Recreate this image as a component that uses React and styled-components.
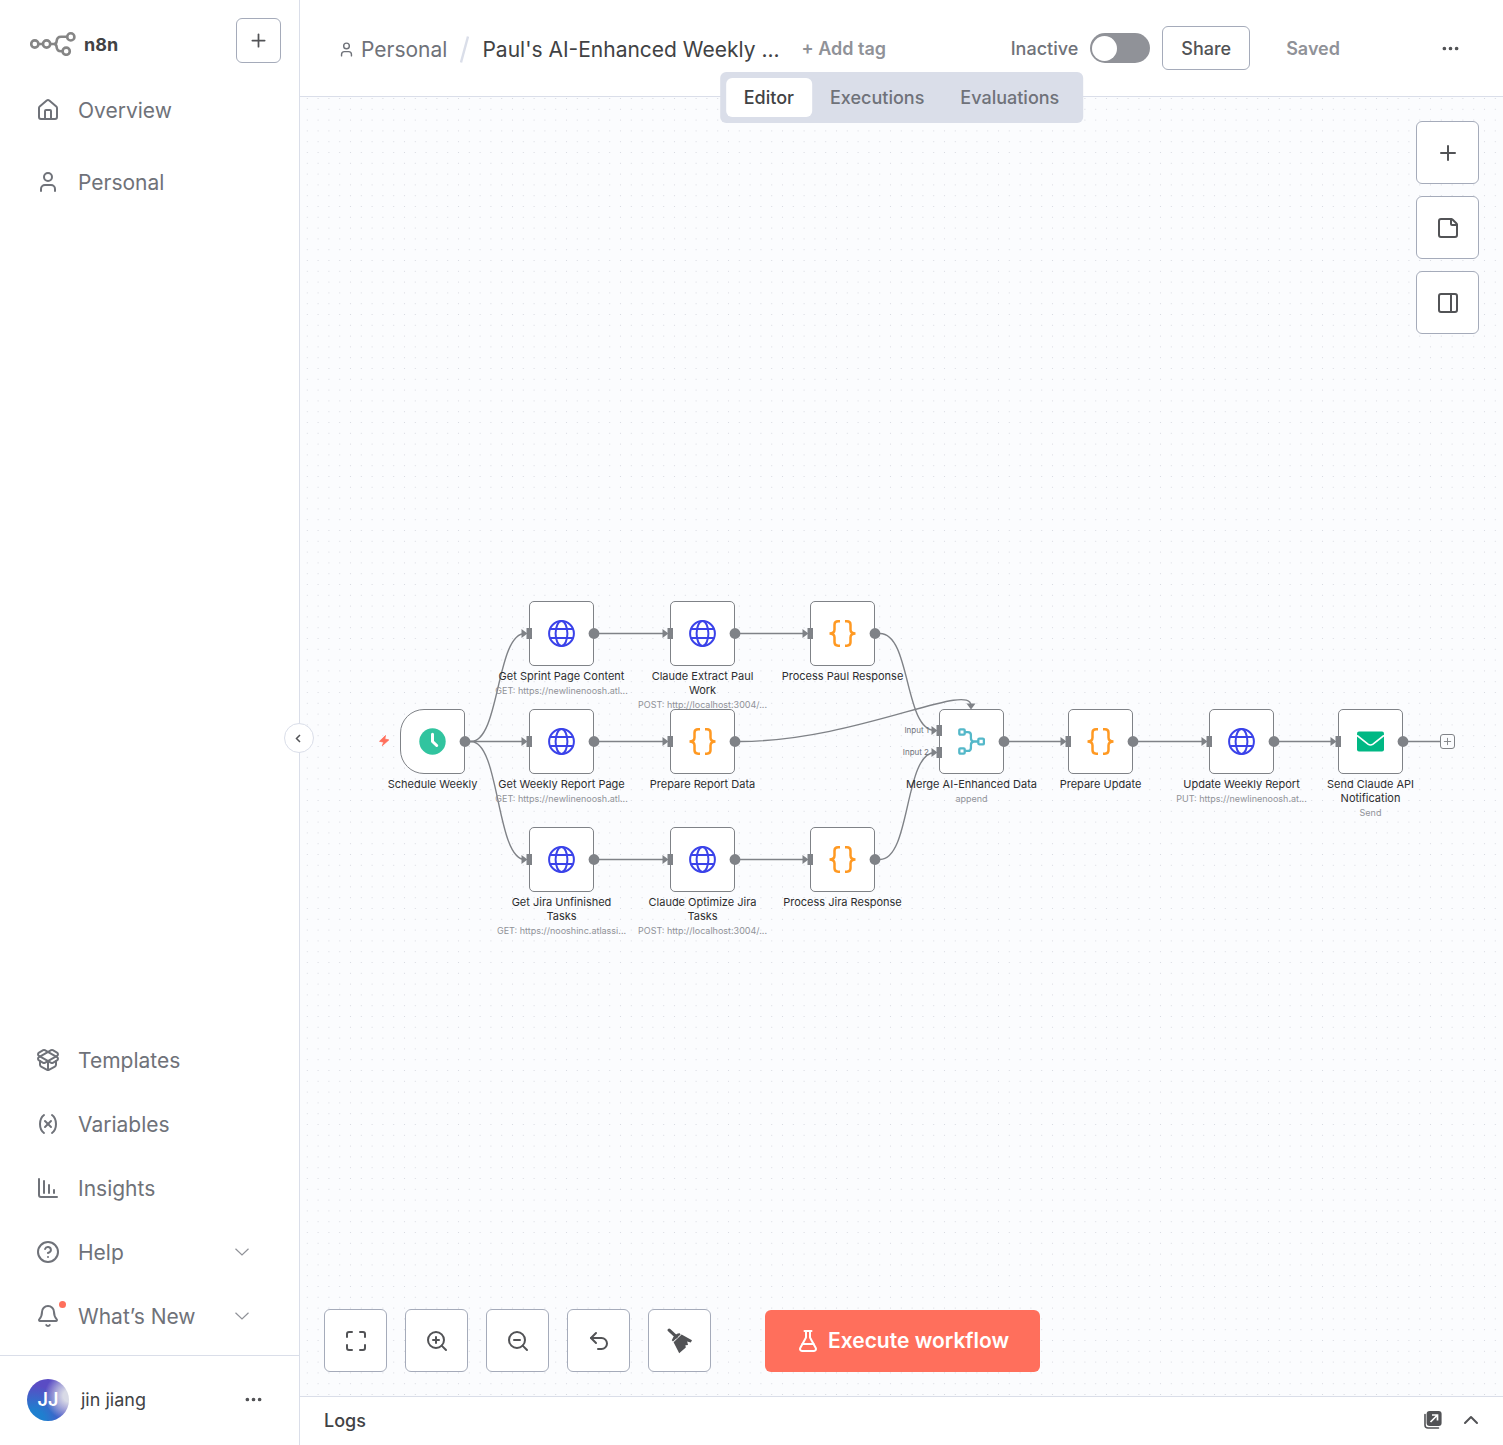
import React from "react";
import styled, { createGlobalStyle, css } from "styled-components";
import {
  Bell,
  ChartColumnDecreasing,
  ChevronUp,
  CircleHelp,
  Ellipsis,
  FlaskConical,
  House,
  Maximize,
  PackageOpen,
  PanelRight,
  Plus,
  StickyNote,
  Undo2,
  User,
  Variable,
  ZoomIn,
  ZoomOut,
} from "lucide-react";

const color = {
  text: "#414244",
  muted: "#6f7279",
  faint: "#909298",
  line: "#dadee9",
  control: "#a5abba",
  icon: "#525356",
  edge: "#7f8287",
  accent: "#ff6f5c",
  canvas: "#fbfcfe",
};

const GlobalStyle = createGlobalStyle`
  *, *::before, *::after { box-sizing: border-box; }
  body {
    margin: 0;
    background: #fff;
    color: ${color.text};
    font-family: Inter, "Liberation Sans", sans-serif;
  }
  button, input { font: inherit; color: inherit; }
  button { cursor: pointer; }
  a { color: inherit; text-decoration: none; }
  svg { display: block; flex: none; }
`;

/* Shell */

const Shell = styled.div`
  display: flex;
  min-height: 100vh;
`;

const Sidebar = styled.aside`
  position: relative;
  flex: none;
  display: flex;
  flex-direction: column;
  width: 300px;
  border-right: 1px solid ${color.line};
`;

const Main = styled.main`
  position: relative;
  flex: 1;
  min-width: 0;
  display: flex;
  flex-direction: column;
`;

const plainButton = css`
  display: flex;
  align-items: center;
  justify-content: center;
  padding: 0;
  border: 0;
  background: none;
`;

const SquareButton = styled.button`
  ${plainButton}
  flex: none;
  width: ${(p) => p.$size}px;
  height: ${(p) => p.$size}px;
  border: 1px solid ${color.control};
  border-radius: 6px;
  background: #fff;
  color: ${color.icon};
`;

const IconButton = styled.button`
  ${plainButton}
  flex: none;
  width: 24px;
  height: 24px;
  color: ${color.icon};
`;

/* Sidebar */

const Brand = styled.div`
  display: flex;
  align-items: flex-start;
  justify-content: space-between;
  padding: 18px 18px 12px 30px;
`;

const Logo = styled.a`
  display: flex;
  align-items: center;
  gap: 8px;
  height: 52px;
  font-size: 18px;
  font-weight: 700;
`;

const Nav = styled.nav`
  display: flex;
  flex-direction: column;
  gap: ${(p) => p.$gap}px;
  padding: 0 50px 0 36px;
  margin-bottom: ${(p) => (p.$fill ? "auto" : "11px")};
`;

const navItem = css`
  position: relative;
  display: flex;
  align-items: center;
  gap: 18px;
  height: 56px;
  font-size: 21px;
  color: ${color.muted};
`;

const NavLink = styled.a`
  ${navItem}
`;

const NavButton = styled.button`
  ${navItem}
  width: 100%;
  padding: 0;
  border: 0;
  background: none;
  text-align: left;
`;

const NavText = styled.span`
  flex: 1;
`;

const NewsDot = styled.span`
  position: absolute;
  left: 23px;
  top: 13px;
  width: 7px;
  height: 7px;
  border-radius: 50%;
  background: ${color.accent};
`;

const CollapseButton = styled.button`
  ${plainButton}
  position: absolute;
  top: 723px;
  right: -15px;
  z-index: 3;
  width: 30px;
  height: 30px;
  padding-right: 2px;
  border: 1px solid ${color.line};
  border-radius: 50%;
  background: #fff;
  color: ${color.icon};
`;

const Account = styled.div`
  display: flex;
  align-items: center;
  gap: 12px;
  height: 90px;
  padding: 0 34px 2px 27px;
  border-top: 1px solid ${color.line};
  font-size: 18px;
`;

const Avatar = styled.span`
  display: flex;
  align-items: center;
  justify-content: center;
  width: 42px;
  height: 42px;
  border-radius: 50%;
  background:
    radial-gradient(circle at 100% 40%, #d8dae6 12%, rgba(200, 203, 226, 0.7) 28%, rgba(200, 203, 226, 0) 50%),
    radial-gradient(circle at 15% 100%, #1f7fcf 20%, rgba(31, 127, 207, 0) 65%),
    #5a4cc4;
  color: #fff;
  font-weight: 600;
`;

const AccountName = styled.span`
  flex: 1;
`;

/* Header */

const Header = styled.header`
  display: flex;
  align-items: center;
  height: 97px;
  padding: 0 41px 0 38px;
  border-bottom: 1px solid ${color.line};
`;

const Crumbs = styled.div`
  display: flex;
  align-items: center;
  gap: 13px;
  padding-top: 2px;
  font-size: 21px;
  color: ${color.muted};
  white-space: nowrap;
`;

const CrumbLink = styled.a`
  display: flex;
  align-items: center;
  gap: 6px;
`;

const Title = styled.h1`
  margin: 0;
  font-size: 21px;
  font-weight: 400;
  color: ${color.text};
`;

const TagButton = styled.button`
  ${plainButton}
  margin-left: 22px;
  font-size: 18px;
  font-weight: 600;
  color: ${color.faint};
  white-space: nowrap;
`;

const HeaderActions = styled.div`
  display: flex;
  align-items: center;
  gap: 12px;
  margin-left: auto;
  font-size: 18px;
`;

const SwitchLabel = styled.label`
  display: flex;
  align-items: center;
  gap: 12px;
  font-weight: 500;
  color: ${color.muted};
`;

const Switch = styled.input`
  appearance: none;
  display: flex;
  align-items: center;
  width: 60px;
  height: 30px;
  margin: 0;
  padding: 0 2px;
  border-radius: 15px;
  background: ${color.faint};
  cursor: pointer;

  &::before {
    content: "";
    width: 25px;
    height: 25px;
    border-radius: 50%;
    background: #fff;
  }

  &:checked { justify-content: flex-end; background: #2fb67c; }
`;

const ShareButton = styled.button`
  ${plainButton}
  height: 44px;
  padding: 0 18px;
  border: 1px solid ${color.control};
  border-radius: 6px;
  background: #fff;
  font-weight: 500;
  color: ${color.icon};
`;

const SaveState = styled.span`
  padding: 0 86px 0 24px;
  font-weight: 600;
  color: ${color.faint};
`;

const Tabs = styled.div`
  position: absolute;
  top: 72px;
  left: 50%;
  z-index: 2;
  display: flex;
  padding: 6px;
  border-radius: 6px;
  background: ${color.line};
  transform: translateX(-50%);
`;

const Tab = styled.button`
  ${plainButton}
  height: 39px;
  padding: 0 18px;
  border-radius: 6px;
  background: ${(p) => (p.$active ? "#fff" : "none")};
  font-size: 18px;
  font-weight: 500;
  color: ${(p) => (p.$active ? color.text : color.muted)};
`;

/* Canvas */

const Canvas = styled.section`
  position: relative;
  flex: 1;
  display: flex;
  flex-direction: column;
  justify-content: space-between;
  padding: 24px;
  overflow: hidden;
  background: ${color.canvas};
`;

const Backdrop = styled.svg`
  position: absolute;
  inset: 0;
  width: 100%;
  height: 100%;
`;

const CanvasTools = styled.div`
  position: relative;
  display: flex;
  flex-direction: column;
  gap: 12px;
  align-self: flex-end;
`;

const CanvasControls = styled.div`
  position: relative;
  display: flex;
  align-items: center;
  gap: 18px;
`;

const ExecuteButton = styled.button`
  ${plainButton}
  gap: 8px;
  height: 62px;
  margin-left: 36px;
  padding: 0 31px;
  border-radius: 6px;
  background: ${color.accent};
  color: #fff;
  font-size: 21px;
  font-weight: 600;
`;

const NodeRoot = styled.div`
  position: absolute;
  left: ${(p) => p.$x}px;
  top: ${(p) => p.$y}px;
  display: flex;
  flex-direction: column;
  align-items: center;
  width: 65px;
`;

const NodeBox = styled.div`
  display: flex;
  align-items: center;
  justify-content: center;
  width: 65px;
  height: 65px;
  margin-bottom: 3px;
  border: 1px solid ${color.edge};
  border-radius: ${(p) => (p.$trigger ? "24px 5px 5px 24px" : "5px")};
  background: #fff;
`;

const NodeName = styled.div`
  margin-bottom: 1px;
  font-size: 11px;
  font-weight: 400;
  line-height: 14px;
  text-align: center;
  white-space: pre;
  color: #2d2e30;
`;

const NodeNote = styled.div`
  font-size: 9px;
  line-height: 14px;
  color: ${color.faint};
  white-space: nowrap;
`;

const PortLabel = styled.span`
  position: absolute;
  left: ${(p) => p.$x}px;
  top: ${(p) => p.$y}px;
  width: 36px;
  font-size: 8px;
  line-height: 10px;
  text-align: right;
  color: ${color.muted};
`;

const AddNodeButton = styled.button`
  ${plainButton}
  position: absolute;
  left: 1140px;
  top: 637px;
  width: 15px;
  height: 15px;
  border: 1px solid ${color.edge};
  border-radius: 3px;
  background: ${color.canvas};
  color: ${color.edge};
`;

/* Logs */

const LogsBar = styled.footer`
  display: flex;
  align-items: center;
  gap: 14px;
  height: 49px;
  padding: 0 20px 2px 24px;
  border-top: 1px solid ${color.line};
`;

const LogsTitle = styled.h2`
  flex: 1;
  margin: 0;
  font-size: 18px;
  font-weight: 500;
`;

/* Drawings */

const LogoMark = () => (
  <svg width="46" height="24" viewBox="0 0 46 24" fill="none" stroke="#858585" strokeWidth="2.6">
    <circle cx="4.8" cy="12" r="3.6" />
    <circle cx="16.6" cy="12" r="3.6" />
    <path d="M8.4 12h4.6M20.2 12H24q2.4 0 2.6-2.6.4-4.6 4.4-4.6h5.6" />
    <path d="M24 12q2.4 0 2.6 2.8.4 4.4 4.4 4.4h1.6" />
    <circle cx="40.8" cy="4.9" r="3.6" />
    <circle cx="36.2" cy="19.2" r="3.6" />
  </svg>
);

const ThinChevron = () => (
  <svg width="14" height="8" viewBox="0 0 14 8" fill="none" stroke={color.faint} strokeWidth="1.2">
    <path d="M.5.7 7 7 13.5.7" />
  </svg>
);

const GlobeIcon = () => (
  <svg width="27" height="27" viewBox="0.5 0.5 27 27" fill="none" stroke="#3a42e9" strokeWidth="2">
    <circle cx="14" cy="14" r="12.4" />
    <ellipse cx="14" cy="14" rx="5.9" ry="12.4" />
    <path d="M2.6 9.4h22.8M2.6 18.6h22.8" />
  </svg>
);

const BracesIcon = () => (
  <svg width="27" height="27" viewBox="0.5 0.5 27 27" fill="none" stroke="#ff9922" strokeWidth="2.5">
    <path d="M11.5 1.8H9.6Q6 1.8 6 5.200V10q0 4-5 4 5 0 5 4v4.800q0 3.400 3.600 3.400h1.900" />
    <path d="M16.5 1.8h1.900Q22 1.800 22 5.200V10q0 4 5 4-5 0-5 4v4.800q0 3.400-3.600 3.400h-1.900" />
  </svg>
);

const ClockIcon = () => (
  <svg width="27" height="27" viewBox="0.5 0.5 27 27" fill="none">
    <circle cx="14" cy="14" r="13.2" fill="#31c49f" />
    <path d="M14 6.8V14l4.200 4" stroke="#fff" strokeWidth="3" strokeLinecap="round" strokeLinejoin="round" />
  </svg>
);

const MergeIcon = () => (
  <svg width="27" height="27" viewBox="0.5 0.5 27 27" fill="none" stroke="#54b8c9" strokeWidth="2.3">
    <rect x="1.8" y="1.8" width="5.4" height="5.4" rx="1" />
    <rect x="1.8" y="20.8" width="5.4" height="5.4" rx="1" />
    <rect x="20.8" y="11.2" width="5.6" height="5.6" rx="1" />
    <path d="M7 4.600h3.400q3 0 3 3v2.600q0 3.800 3.400 3.800H21M7 23.400h3.400q3 0 3-3v-2.600q0-3.800 3.400-3.800" />
  </svg>
);

const MailIcon = () => (
  <svg width="27" height="21" viewBox="0.5 0.5 27 21">
    <rect x=".5" y="1" width="27" height="20" rx="2" fill="#00b884" />
    <path d="m.5 5 11 8.600q2.500 1.800 5 0l11-8.600" fill="none" stroke="#fff" strokeWidth="1.700" />
  </svg>
);

const BroomIcon = () => (
  <svg width="26" height="26" viewBox="0 0 26 26" fill="currentColor">
    <path d="m2.200 2.200 7 6.500" fill="none" stroke="currentColor" strokeWidth="3.200" strokeLinecap="round" />
    <path d="M4.800 12.300Q6 8.500 9 6.500q1.600-1.200 3.800-1.300l.8 1.300-7.600 7z" />
    <path d="M14.600 6.600 25 12.300l-1.200 2.200-3.600-.9.800 3.400-2.600.2.400 2.300-6.600 5.700L6.600 14.200z" />
  </svg>
);

const PopOutIcon = () => (
  <svg width="20" height="20" viewBox="0 0 20 20" fill="none">
    <path d="M2 4.500v10.500q0 3 3 3h10.500" stroke={color.icon} strokeWidth="1.600" strokeLinecap="round" />
    <rect x="3.600" y="1" width="15" height="15" rx="3" fill={color.icon} />
    <path d="M7.500 12l6.500-6.500M9 5h5.500v5.500" stroke="#fff" strokeWidth="1.700" />
  </svg>
);

const icons = { globe: GlobeIcon, braces: BracesIcon, clock: ClockIcon, merge: MergeIcon, mail: MailIcon };

/* Workflow data, in canvas coordinates */

const nodes = [
  { x: 100, y: 612, icon: "clock", name: "Schedule Weekly", trigger: true },
  { x: 229, y: 504, icon: "globe", name: "Get Sprint Page Content", note: "GET: https://newlinenoosh.atl..." },
  { x: 370, y: 504, icon: "globe", name: "Claude Extract Paul\nWork", note: "POST: http://localhost:3004/..." },
  { x: 510, y: 504, icon: "braces", name: "Process Paul Response" },
  { x: 229, y: 612, icon: "globe", name: "Get Weekly Report Page", note: "GET: https://newlinenoosh.atl..." },
  { x: 370, y: 612, icon: "braces", name: "Prepare Report Data" },
  { x: 229, y: 730, icon: "globe", name: "Get Jira Unfinished\nTasks", note: "GET: https://nooshinc.atlassi..." },
  { x: 370, y: 730, icon: "globe", name: "Claude Optimize Jira\nTasks", note: "POST: http://localhost:3004/..." },
  { x: 510, y: 730, icon: "braces", name: "Process Jira Response" },
  { x: 639, y: 612, icon: "merge", name: "Merge AI-Enhanced Data", note: "append", inputs: [-11, 11] },
  { x: 768, y: 612, icon: "braces", name: "Prepare Update" },
  { x: 909, y: 612, icon: "globe", name: "Update Weekly Report", note: "PUT: https://newlinenoosh.at..." },
  { x: 1038, y: 612, icon: "mail", name: "Send Claude API\nNotification", note: "Send" },
];

const edges = [
  "M165 644.5H171C200 644.5 196 536.5 225 536.5",
  "M165 644.5H225",
  "M165 644.5H171C200 644.5 196 762.5 225 762.5",
  "M294 536.5H365",
  "M435 536.5H505",
  "M294 644.5H365",
  "M294 762.5H365",
  "M435 762.5H505",
  "M575 536.5H580C611 536.5 604 633.5 635 633.5",
  "M575 762.5H580C611 762.5 604 655.5 635 655.5",
  "M435 644.5H440C556 644.5 671 583 671 609",
  "M704 644.5H764",
  "M833 644.5H904",
  "M974 644.5H1033",
  "M1103 644.5H1140",
];

const Ports = ({ x, y, trigger, inputs = [0] }) => {
  const mid = y + 32.5;
  return (
    <g fill={color.edge}>
      <circle cx={x + 65} cy={mid} r="5.4" />
      {!trigger &&
        inputs.map((dy) => (
          <g key={dy}>
            <rect x={x - 2.5} y={mid + dy - 5.5} width="5.5" height="11" />
            <path d={`M${x - 7.5} ${mid + dy - 4.5}l6 4.5-6 4.5z`} />
          </g>
        ))}
    </g>
  );
};

const WorkflowNode = ({ x, y, icon, name, note, trigger }) => {
  const Icon = icons[icon];
  return (
    <NodeRoot $x={x} $y={y}>
      <NodeBox $trigger={trigger}>
        <Icon />
      </NodeBox>
      <NodeName>{name}</NodeName>
      {note && <NodeNote>{note}</NodeNote>}
    </NodeRoot>
  );
};

const Flow = () => (
  <>
    <Backdrop aria-hidden="true">
      <defs>
        <pattern id="dots" x="1.9" y="-3.9" width="10.8" height="10.8" patternUnits="userSpaceOnUse">
          <circle cx="5.4" cy="5.4" r=".6" fill="#d3d6de" />
        </pattern>
      </defs>
      <rect width="100%" height="100%" fill="url(#dots)" />
      <g fill="none" stroke={color.edge} strokeWidth="1.35">
        {edges.map((d) => (
          <path key={d} d={d} />
        ))}
      </g>
      <path
        d="M85.500 638.500 79.500 644.300l4.200.9-1.400 3.500 6.500-5.800-4-.9z"
        fill={color.accent}
        stroke={color.accent}
        strokeWidth=".8"
        strokeLinejoin="round"
      />
    </Backdrop>
    {nodes.map((n) => (
      <WorkflowNode key={n.name} {...n} />
    ))}
    <PortLabel $x={593} $y={628}>Input 1</PortLabel>
    <PortLabel $x={593} $y={650}>Input 2</PortLabel>
    <Backdrop aria-hidden="true">
      {nodes.map((n) => (
        <Ports key={n.name} {...n} />
      ))}
      <path d="M666.500 606.500h9l-4.500 6z" fill={color.edge} />
    </Backdrop>
    <AddNodeButton aria-label="Add node">
      <Plus size={11} strokeWidth={2} />
    </AddNodeButton>
  </>
);

const bottomLinks = [
  { icon: PackageOpen, label: "Templates" },
  { icon: Variable, label: "Variables" },
  { icon: ChartColumnDecreasing, label: "Insights" },
];

export default function App() {
  return (
    <>
      <GlobalStyle />
      <Shell>
        <Sidebar>
          <Brand>
            <Logo href="#">
              <LogoMark />
              n8n
            </Logo>
            <SquareButton $size={45} aria-label="Create">
              <Plus size={21} strokeWidth={2} />
            </SquareButton>
          </Brand>
          <Nav $gap={16} $fill>
            <NavLink href="#overview">
              <House size={24} strokeWidth={2} />
              <NavText>Overview</NavText>
            </NavLink>
            <NavLink href="#personal">
              <User size={24} strokeWidth={2} />
              <NavText>Personal</NavText>
            </NavLink>
          </Nav>
          <Nav $gap={8}>
            {bottomLinks.map(({ icon: Icon, label }) => (
              <NavLink key={label} href={`#${label}`}>
                <Icon size={24} strokeWidth={2} />
                <NavText>{label}</NavText>
              </NavLink>
            ))}
            <NavButton>
              <CircleHelp size={24} strokeWidth={2} />
              <NavText>Help</NavText>
              <ThinChevron />
            </NavButton>
            <NavButton>
              <Bell size={24} strokeWidth={2} />
              <NewsDot />
              <NavText>What’s New</NavText>
              <ThinChevron />
            </NavButton>
          </Nav>
          <Account>
            <Avatar>JJ</Avatar>
            <AccountName>jin jiang</AccountName>
            <IconButton aria-label="Account menu">
              <Ellipsis size={21} strokeWidth={2.2} />
            </IconButton>
          </Account>
          <CollapseButton aria-label="Collapse sidebar">
            <svg width="6" height="9" viewBox="0 0 6 9" fill="none" stroke="currentColor" strokeWidth="1.5">
              <path d="M5 1 1.5 4.500 5 8" />
            </svg>
          </CollapseButton>
        </Sidebar>

        <Main>
          <Header>
            <Crumbs>
              <CrumbLink href="#personal">
                <User size={17} strokeWidth={2} />
                Personal
              </CrumbLink>
              <svg width="9" height="27" viewBox="0 0 9 27" fill="none" stroke={color.line} strokeWidth="2.4">
                <path d="M8 .5 1 26.5" />
              </svg>
              <Title>Paul's AI-Enhanced Weekly ...</Title>
            </Crumbs>
            <TagButton>+ Add tag</TagButton>
            <HeaderActions>
              <SwitchLabel>
                Inactive
                <Switch type="checkbox" role="switch" />
              </SwitchLabel>
              <ShareButton>Share</ShareButton>
              <SaveState>Saved</SaveState>
              <IconButton aria-label="Workflow menu">
                <Ellipsis size={21} strokeWidth={2.2} />
              </IconButton>
            </HeaderActions>
          </Header>

          <Tabs role="tablist">
            <Tab role="tab" aria-selected="true" $active>Editor</Tab>
            <Tab role="tab" aria-selected="false">Executions</Tab>
            <Tab role="tab" aria-selected="false">Evaluations</Tab>
          </Tabs>

          <Canvas>
            <Flow />
            <CanvasTools>
              <SquareButton $size={63} aria-label="Add node">
                <Plus size={24} strokeWidth={2} />
              </SquareButton>
              <SquareButton $size={63} aria-label="Add sticky note">
                <StickyNote size={24} strokeWidth={2} />
              </SquareButton>
              <SquareButton $size={63} aria-label="Open panel">
                <PanelRight size={24} strokeWidth={2} />
              </SquareButton>
            </CanvasTools>
            <CanvasControls>
              <SquareButton $size={63} aria-label="Fit view">
                <Maximize size={24} strokeWidth={2} />
              </SquareButton>
              <SquareButton $size={63} aria-label="Zoom in">
                <ZoomIn size={24} strokeWidth={2} />
              </SquareButton>
              <SquareButton $size={63} aria-label="Zoom out">
                <ZoomOut size={24} strokeWidth={2} />
              </SquareButton>
              <SquareButton $size={63} aria-label="Undo">
                <Undo2 size={24} strokeWidth={2} />
              </SquareButton>
              <SquareButton $size={63} aria-label="Tidy up">
                <BroomIcon />
              </SquareButton>
              <ExecuteButton>
                <FlaskConical size={24} strokeWidth={2} />
                Execute workflow
              </ExecuteButton>
            </CanvasControls>
          </Canvas>

          <LogsBar>
            <LogsTitle>Logs</LogsTitle>
            <IconButton aria-label="Pop out logs">
              <PopOutIcon />
            </IconButton>
            <IconButton aria-label="Expand logs">
              <ChevronUp size={24} strokeWidth={2} />
            </IconButton>
          </LogsBar>
        </Main>
      </Shell>
    </>
  );
}
